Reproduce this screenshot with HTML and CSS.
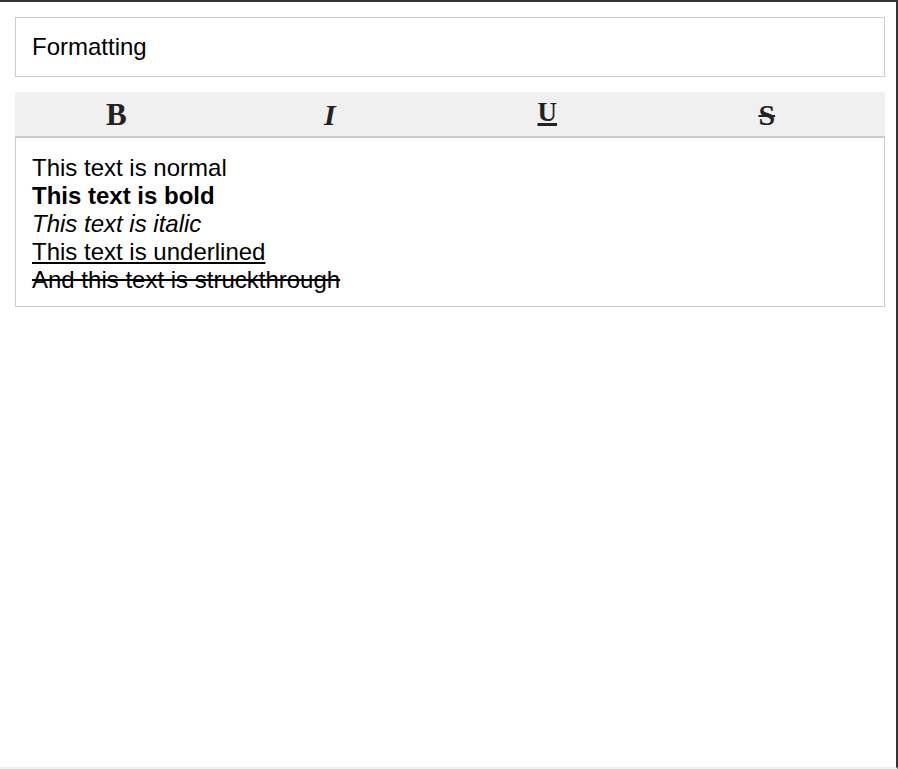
FILE: index.html
```html
<!DOCTYPE html>
<html>
<head>
<meta charset="utf-8">
<link rel="stylesheet" href="styles.css">
</head>
<body>
<div class="frame">
  <div class="card title-card">Formatting</div>
  <div class="editor">
    <div class="toolbar">
      <div class="tool"><span class="glyph g-bold">B</span></div>
      <div class="tool"><span class="glyph g-italic">I</span></div>
      <div class="tool"><span class="glyph g-under">U</span></div>
      <div class="tool"><span class="glyph g-strike">S</span></div>
    </div>
    <div class="card content-card">
      <div>This text is normal</div>
      <div class="b">This text is bold</div>
      <div class="i">This text is italic</div>
      <div class="u">This text is underlined</div>
      <div class="s">And this text is struckthrough</div>
    </div>
  </div>
</div>
</body>
</html>
```

FILE: styles.css
```css
html, body {
  margin: 0;
  padding: 0;
  background: #fff;
}

.frame {
  box-sizing: border-box;
  width: 898px;
  height: 769px;
  border-top: 2px solid #333;
  border-right: 2px solid #333;
  border-bottom: 2px solid #f0f0f0;
  padding: 15px 11px 0 15px;
  font-family: "Liberation Sans", Arial, sans-serif;
  font-size: 24px;
  color: #000;
  display: flex;
  flex-direction: column;
  gap: 15px;
}

.card {
  border: 1px solid #ccc;
  background: #fff;
  padding: 15px 16px;
  line-height: 27.6px;
}

.content-card {
  line-height: 28px;
  padding: 16px 16px 12px;
}

.editor {
  display: flex;
  flex-direction: column;
}

.toolbar {
  background: #f0f0f0;
  border-bottom: 1px solid #ccc;
  height: 44px;
  display: grid;
  grid-template-columns: repeat(4, 1fr);
}

.tool {
  display: flex;
  align-items: center;
  justify-content: center;
  padding-right: 19px;
  padding-top: 2px;
}

.glyph {
  font-family: "Liberation Serif", "Times New Roman", serif;
  font-weight: bold;
  font-size: 30px;
  line-height: 1;
  color: #222;
}

.g-bold {
  font-size: 31px;
  transform: translateX(2px);
}

.g-italic {
  font-style: italic;
  transform: translateX(-2px);
}

.g-under {
  font-size: 27px;
  text-decoration: underline;
  text-decoration-thickness: 3px;
  text-underline-offset: 2px;
  transform: translateX(-2px) translateY(-2px);
}

.g-strike {
  text-decoration: line-through;
  text-decoration-thickness: 2px;
}

.b { font-weight: bold; }
.i { font-style: italic; }
.u { text-decoration: underline; }
.s { text-decoration: line-through; }
```
